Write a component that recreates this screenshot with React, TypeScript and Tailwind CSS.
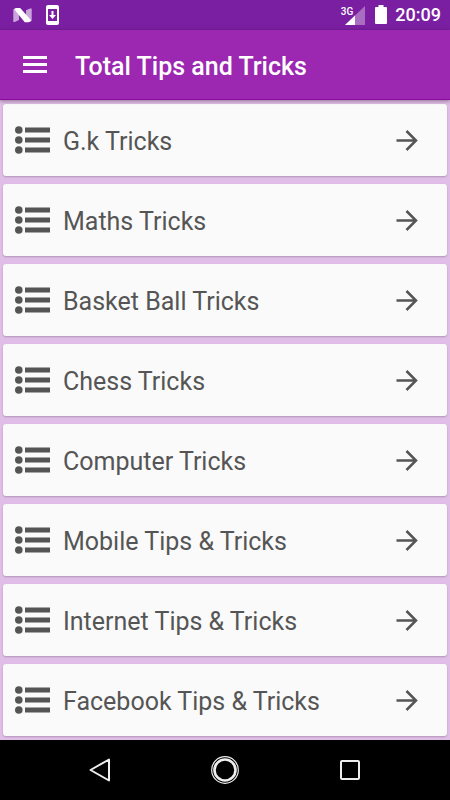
const tricks = [
  'G.k Tricks',
  'Maths Tricks',
  'Basket Ball Tricks',
  'Chess Tricks',
  'Computer Tricks',
  'Mobile Tips & Tricks',
  'Internet Tips & Tricks',
  'Facebook Tips & Tricks',
];

function StatusBar() {
  return (
    <div className="flex h-[30px] items-center justify-between bg-[#7b1fa2] pl-3 pr-[9px] text-white">
      <div className="flex items-center gap-3">
        <svg className="h-5 w-5" viewBox="0 0 20 20" fill="currentColor">
          <path d="M1.300 4.500L3 3.500L7 8V15L2.800 17H1.300zM14 5.200L18 3.500H19.700V15.500L18.500 16.800L14 12z" opacity="0.6" />
          <path d="M2.200 4.200Q3 3 4.500 3H8.200L19 15.200Q18.200 17.200 16.500 17.200H12.800z" />
        </svg>
        <svg className="h-5 w-4" viewBox="0 0 16 20">
          <rect x="2" y="0" width="13" height="20" rx="2" fill="white" />
          <rect x="4" y="4" width="9" height="12" fill="#7b1fa2" />
          <path d="M7.500 6h2V10h2.500l-3.500 4L5 10h2.500z" fill="white" />
        </svg>
      </div>
      <div className="flex items-center">
        <div className="flex items-start">
          <span className="text-[10px] font-medium leading-3">3G</span>
          <svg className="-ml-2 h-[19px] w-5" viewBox="0 0 20 19" fill="currentColor">
            <path d="M20 0V19H0z" opacity="0.35" />
            <path d="M10 9.500V19H0z" />
          </svg>
        </div>
        <svg className="ml-[10px] h-5 w-3" viewBox="0 0 12 20" fill="currentColor">
          <path d="M3.500 0h5v2H11q1 0 1 1V18q0 1-1 1H1q-1 0-1-1V3q0-1 1-1h2.500z" />
        </svg>
        <span className="ml-2 text-lg font-medium leading-[30px]">20:09</span>
      </div>
    </div>
  );
}

function Header() {
  return (
    <header className="relative flex h-[70px] items-center border-b border-[#8c0a9f] bg-[#9c27b0] pl-[23px] text-white shadow-[0_1px_4px_rgba(0,0,0,0.4)]">
      <button aria-label="Open menu" className="mr-7">
        <svg className="h-[17px] w-6" viewBox="0 0 24 17" fill="currentColor">
          <path d="M0 0h24v3H0zM0 7h24v3H0zM0 14h24v3H0z" />
        </svg>
      </button>
      <h1 className="pt-1 text-[25px] font-medium leading-8">Total Tips and Tricks</h1>
    </header>
  );
}

function TrickRow({ title }: { title: string }) {
  return (
    <li>
      <button className="flex h-[72px] w-full items-center rounded-[3px] bg-[#fafafa] pl-3 pr-[29px] text-left text-[#555] shadow-[0_1px_2px_rgba(0,0,0,0.22)]">
        <svg className="h-7 w-[35px] shrink-0" viewBox="0 0 35 28" fill="currentColor">
          <circle cx="3.800" cy="4" r="3.800" />
          <circle cx="3.800" cy="14" r="3.800" />
          <circle cx="3.800" cy="24" r="3.800" />
          <path d="M10 1.600h25v4.800H10zM10 11.600h25v4.800H10zM10 21.600h25v4.800H10z" />
        </svg>
        <span className="ml-[13px] flex-1 pt-1 text-[25px] leading-8">{title}</span>
        <svg className="h-6 w-6 shrink-0" viewBox="0 0 24 24" fill="none" stroke="currentColor" strokeWidth="2.500">
          <path d="M2.500 12.500H21.500M12.500 3l9.500 9.500-9.500 9.500" />
        </svg>
      </button>
    </li>
  );
}

function NavBar() {
  return (
    <nav className="grid h-[60px] grid-cols-3 bg-black px-[38px] text-[#eee]">
      <button aria-label="Back" className="flex items-center justify-center">
        <svg className="h-6 w-6" viewBox="0 0 24 24" fill="none" stroke="currentColor" strokeWidth="2" strokeLinejoin="round">
          <path d="M21 1.500v21L2.500 12z" />
        </svg>
      </button>
      <button aria-label="Home" className="flex items-center justify-center">
        <svg className="h-7 w-7" viewBox="0 0 28 28" fill="none" stroke="currentColor">
          <circle cx="14" cy="14" r="13.300" strokeWidth="1.200" />
          <circle cx="14" cy="14" r="10.500" strokeWidth="2.600" />
        </svg>
      </button>
      <button aria-label="Recent apps" className="flex items-center justify-center">
        <svg className="h-6 w-6" viewBox="0 0 24 24" fill="none" stroke="currentColor" strokeWidth="2">
          <rect x="3" y="3" width="18" height="18" rx="1" />
        </svg>
      </button>
    </nav>
  );
}

export default function App() {
  return (
    <div className="flex min-h-screen flex-col bg-[#e1bee7] font-[Roboto,sans-serif]">
      <StatusBar />
      <Header />
      <main className="flex-1 px-[3px] py-1">
        <ul className="space-y-2">
          {tricks.map(title => (
            <TrickRow key={title} title={title} />
          ))}
        </ul>
      </main>
      <NavBar />
    </div>
  );
}
